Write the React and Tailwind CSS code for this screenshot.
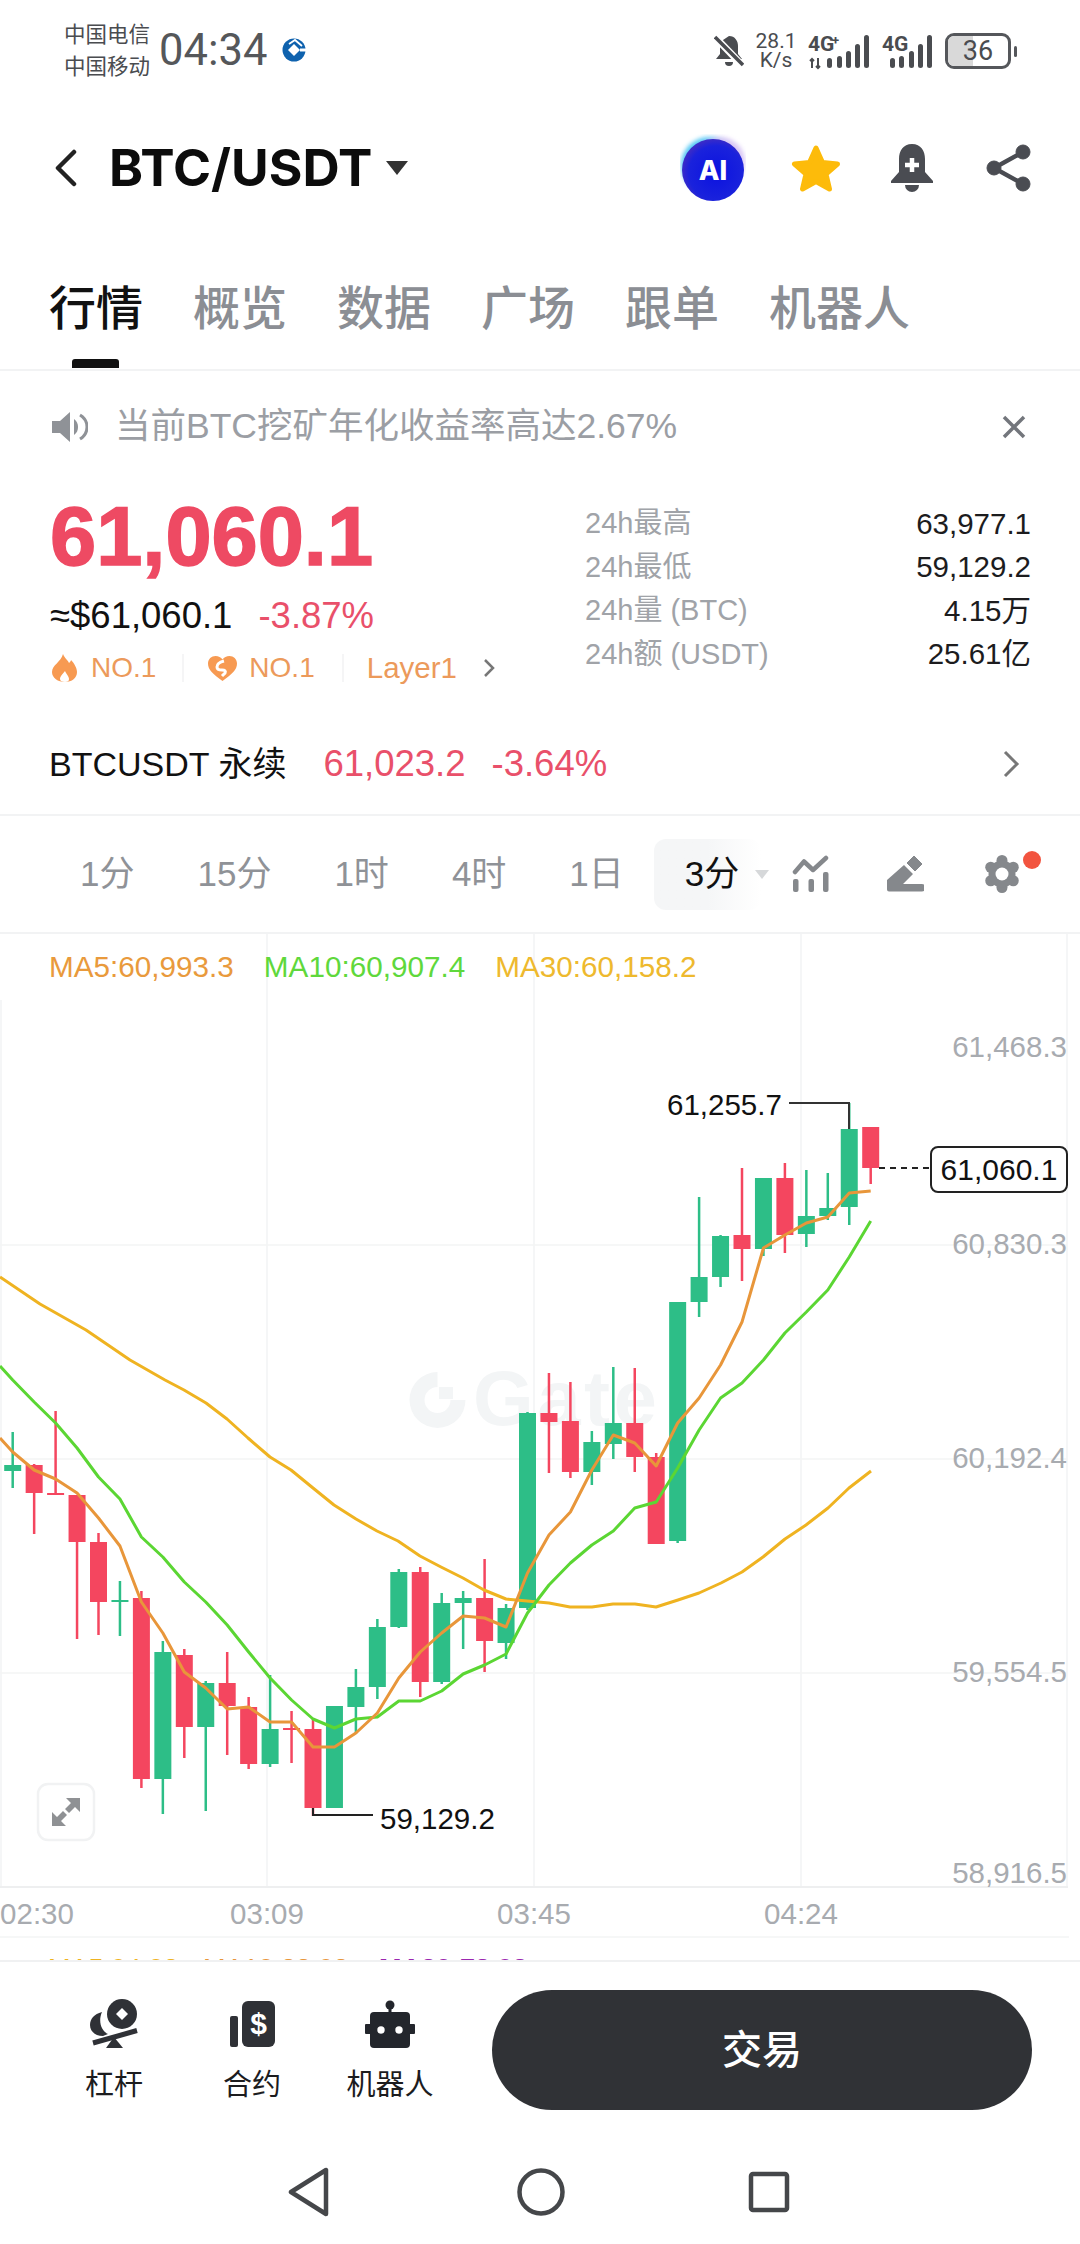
import React from "react";

const RED = "#f4465f";
const GREEN = "#2dbe87";

// [最高, 最低, 实体上, 实体下, 涨跌]  y 是页面坐标
const candles = [
  [1432, 1488, 1465, 1471, 1], [1464, 1534, 1465, 1493, 0], [1411, 1494, 1493, 1495, 0], [1495, 1639, 1495, 1542, 0],
  [1533, 1635, 1542, 1602, 0], [1581, 1636, 1600, 1602, 1], [1591, 1788, 1598, 1779, 0], [1641, 1814, 1652, 1779, 1],
  [1649, 1758, 1655, 1727, 0], [1681, 1811, 1683, 1727, 1], [1652, 1755, 1683, 1706, 0], [1697, 1769, 1707, 1764, 0],
  [1675, 1767, 1729, 1764, 1], [1711, 1763, 1728, 1730, 0], [1719, 1816, 1729, 1808, 0], [1706, 1808, 1706, 1808, 1],
  [1669, 1734, 1687, 1707, 1], [1619, 1699, 1627, 1687, 1], [1569, 1628, 1572, 1627, 1], [1567, 1697, 1572, 1682, 0],
  [1593, 1684, 1603, 1682, 1], [1591, 1649, 1598, 1603, 1], [1559, 1672, 1598, 1641, 0], [1604, 1659, 1608, 1643, 1],
  [1412, 1610, 1413, 1608, 1], [1373, 1473, 1413, 1422, 0], [1382, 1478, 1421, 1472, 0], [1431, 1485, 1442, 1472, 1],
  [1367, 1459, 1423, 1444, 1], [1368, 1472, 1423, 1457, 0], [1453, 1544, 1457, 1544, 0], [1302, 1543, 1302, 1541, 1],
  [1197, 1317, 1277, 1302, 1], [1235, 1287, 1236, 1277, 1], [1168, 1281, 1235, 1249, 0], [1178, 1256, 1178, 1249, 1],
  [1163, 1253, 1178, 1235, 0], [1170, 1247, 1216, 1234, 1], [1173, 1220, 1208, 1216, 1], [1103, 1225, 1129, 1207, 1],
  [1127, 1184, 1127, 1168, 0],
];

const xOf = (i) => 12.7 + 21.45 * i;
const series = (ys) => ys.map((y, i) => `${xOf(i)},${y}`).join(" ");

const ma5 = "0,1438 " + series([1452, 1470, 1479, 1493, 1518, 1546, 1602, 1633, 1672, 1688, 1709, 1707, 1722, 1722, 1747, 1747, 1733, 1713, 1678, 1652, 1633, 1616, 1618, 1627, 1573, 1535, 1512, 1470, 1435, 1443, 1466, 1423, 1398, 1365, 1322, 1248, 1235, 1223, 1217, 1193, 1191]);
const ma10 = "0,1366 " + series([1380, 1402, 1423, 1448, 1477, 1499, 1537, 1557, 1582, 1602, 1625, 1652, 1678, 1700, 1719, 1728, 1719, 1717, 1701, 1701, 1691, 1674, 1665, 1654, 1613, 1585, 1563, 1545, 1531, 1508, 1502, 1468, 1430, 1398, 1383, 1360, 1333, 1312, 1290, 1257, 1221]);
const ma30 = "0,1277 40,1304 86,1330 130,1360 165,1380 184,1390 206,1403 227,1419 248,1438 270,1457 291,1470 313,1488 334,1505 356,1519 377,1531 398,1541 420,1556 441,1567 463,1578 484,1590 506,1599 527,1601 549,1603 570,1607 592,1607 613,1604 635,1604 656,1607 678,1600 699,1593 721,1583 742,1572 763,1557 785,1539 806,1525 828,1508 849,1488 871,1471";

const StatusBar = () => (
  <div className="h-[102px] shrink-0 flex items-center text-[#4a4c50]">
    <div className="ml-[64px] mb-[4px] w-[95px] text-[21.5px] leading-[32px] font-['Noto_Sans_CJK_SC',sans-serif]">
      <div>中国电信</div>
      <div>中国移动</div>
    </div>
    <span className="text-[43.5px] leading-none font-normal text-[#55575a] font-['Roboto',sans-serif]">04:34</span>
    <svg className="ml-[15px] mb-[2px]" width="24" height="24" viewBox="0 0 24 24">
      <circle cx="12" cy="12" r="11.500" fill="#0f62ae" />
      <path d="M12 6l6 6-6 6-6-6z" fill="#fff" />
      <path d="M18 12h6" stroke="#fff" strokeWidth="3" />
      <path d="M7 6l6-4 7 6" fill="none" stroke="#fff" strokeWidth="1.800" />
    </svg>
    <div className="ml-auto mr-[63px] flex items-center">
      <svg width="30" height="34" viewBox="0 0 30 34" fill="#4a4c50">
        <path d="M15 2c6 0 9 5 9 10v8l4 5H2l4-5v-8c0-2 .5-4 1.500-5z" />
        <path d="M11 28h8a4 4 0 0 1-8 0z" />
        <path d="M1 3l26 27" stroke="#fff" strokeWidth="7" />
        <path d="M1 3l28 28" stroke="#4a4c50" strokeWidth="3.500" />
      </svg>
      <div className="ml-[12px] w-[40px] flex flex-col items-center font-['Roboto',sans-serif] text-[21px] leading-[19px]">
        <span>28.1</span>
        <span>K/s</span>
      </div>
      <svg className="ml-[12px]" width="124" height="40" viewBox="809 30 124 40" fill="#4a4c50">
        <text x="809" y="50" fontSize="21" fontWeight="700" fontFamily="Roboto">4G</text>
        <text x="833" y="44" fontSize="13" fontWeight="700" fontFamily="Roboto">+</text>
        <path d="M813 58v9M811 60l2-2 2 2M819 57v10M817 65l2 2 2-2" stroke="#4a4c50" strokeWidth="2" fill="none" />
        {[[828, 57], [838, 55], [847, 50], [856, 43], [865, 34]].map(([x, y]) => (
          <rect key={x} x={x} y={y} width="5" height={67 - y} rx="2.500" />
        ))}
        <text x="883" y="50" fontSize="21" fontWeight="700" fontFamily="Roboto">4G</text>
        {[[891, 57], [900, 55], [910, 50], [919, 43], [928, 34]].map(([x, y]) => (
          <rect key={x} x={x} y={y} width="5" height={67 - y} rx="2.500" />
        ))}
      </svg>
      <div className="ml-[13px] relative w-[66px] h-[36px] rounded-[9px] border-[3px] border-[#55575b] overflow-hidden flex items-center justify-center">
        <div className="absolute left-0 top-0 bottom-0 w-[25px] bg-[#d9d9d9]" />
        <span className="relative text-[27px] leading-none font-['Roboto',sans-serif]">36</span>
      </div>
      <div className="ml-[3px] w-[3px] h-[11px] rounded-full bg-[#55575b]" />
    </div>
  </div>
);

const Header = () => (
  <div className="h-[132px] shrink-0 flex items-center pl-[54px] pr-[49px]">
    <svg width="24" height="38" viewBox="0 0 24 38" fill="none" stroke="#222" strokeWidth="4.500" strokeLinecap="round" strokeLinejoin="round">
      <path d="M20 3L4 19l16 16" />
    </svg>
    <span className="ml-[31px] text-[51.5px] leading-none font-bold text-[#0c0c0c] font-['Inter',sans-serif]">BTC/USDT</span>
    <svg className="ml-[13px]" width="24" height="16" viewBox="0 0 24 16"><path d="M1 1h22L12 15z" fill="#333" /></svg>
    <div className="ml-auto flex items-center">
      <svg width="66" height="68" viewBox="0 0 66 68">
        <defs>
          <radialGradient id="aiFill" cx="55%" cy="55%" r="55%">
            <stop offset="0%" stopColor="#0b12e0" />
            <stop offset="80%" stopColor="#1a22dc" />
            <stop offset="100%" stopColor="#3a2bc8" />
          </radialGradient>
          <filter id="aiGlow"><feGaussianBlur stdDeviation="2" /></filter>
        </defs>
        <circle cx="29" cy="31" r="28" fill="#55c8f5" filter="url(#aiGlow)" />
        <circle cx="40" cy="28" r="25" fill="#d9c8f5" filter="url(#aiGlow)" />
        <circle cx="33" cy="36" r="31" fill="url(#aiFill)" />
        <text x="33" y="46" textAnchor="middle" fill="#fff" fontSize="27" fontWeight="800" fontFamily="Inter">AI</text>
      </svg>
      <svg className="ml-[45px]" width="50" height="48" viewBox="0 0 50 48">
        <path d="M25 4l6.500 14.500 15 1.500-11.500 10 3.500 15L25 37.500 11.500 45 15 30 3.500 20l15-1.500z" fill="#fdbb0a" stroke="#fdbb0a" strokeWidth="5" strokeLinejoin="round" />
      </svg>
      <svg className="ml-[50px]" width="42" height="48" viewBox="0 0 42 48" fill="#4a4c52">
        <path d="M21 0c9 0 13 7 13 15v13l8 9v2H0v-2l8-9V15C8 7 12 0 21 0z" />
        <path d="M14 41h14a7 7 0 0 1-14 0z" />
        <path d="M21 14v14M14 21h14" stroke="#fff" strokeWidth="4.500" />
      </svg>
      <svg className="ml-[53px]" width="45" height="48" viewBox="0 0 45 48" fill="#4a4c52" stroke="#4a4c52">
        <path d="M37 8L8 24l29 16" fill="none" strokeWidth="4.500" />
        <circle cx="37" cy="8" r="7" />
        <circle cx="8" cy="24" r="7" />
        <circle cx="37" cy="40" r="7" />
      </svg>
    </div>
  </div>
);

const tabs = ["行情", "概览", "数据", "广场", "跟单", "机器人"];

const Tabs = () => (
  <div className="h-[137px] shrink-0 relative border-b-2 border-[#f2f3f4] flex gap-[50px] pl-[49px] pt-[41px]">
    {tabs.map((t, i) => (
      <span key={t} className={`text-[47px] leading-[68px] font-medium ${i === 0 ? "text-[#111]" : "text-[#8b8e94]"}`}>{t}</span>
    ))}
    <div className="absolute left-[72px] bottom-[1px] w-[47px] h-[9px] rounded-t-[3px] bg-[#111]" />
  </div>
);

const Notice = () => (
  <div className="h-[112px] shrink-0 flex items-center pl-[52px] pr-[54px]">
    <svg width="36" height="30" viewBox="0 0 36 30" fill="#8f9297">
      <path d="M0 9h8l10-9v30L8 21H0z" />
      <path d="M22 7c3 2 4 5 4 8s-1 6-4 8z" />
      <path d="M28 3c5 3 7 7 7 12s-2 9-7 12" fill="none" stroke="#8f9297" strokeWidth="3" />
    </svg>
    <span className="ml-[27px] text-[35.500px] leading-none text-[#9b9ea4]">当前BTC挖矿年化收益率高达2.67%</span>
    <svg className="ml-auto" width="24" height="24" viewBox="0 0 24 24" stroke="#73767c" strokeWidth="3.500">
      <path d="M2 2l20 20M22 2L2 22" />
    </svg>
  </div>
);

const stats = [
  ["24h最高", "63,977.1"],
  ["24h最低", "59,129.2"],
  ["24h量 (BTC)", "4.15万"],
  ["24h额 (USDT)", "25.61亿"],
];

const Price = () => (
  <div className="h-[231px] shrink-0 flex pl-[50px] pr-[49px]">
    <div className="w-[535px] shrink-0 pt-[12px]">
      <div className="h-[84px] text-[83px] leading-[84px] font-bold text-[#ee4a63] [-webkit-text-stroke:1.5px_#ee4a63]">61,060.1</div>
      <div className="mt-[15px] h-[44px] flex items-center text-[36.500px] leading-none">
        <span className="text-[#111]">≈$61,060.1</span>
        <span className="ml-[26px] text-[#e9506a]">-3.87%</span>
      </div>
      <div className="mt-[12px] h-[36px] flex items-center text-[28px] text-[#ec9a5b]">
        <svg className="ml-[2px]" width="25" height="28" viewBox="0 0 25 28">
          <path d="M11 0c2 5 5 6 6 9 1-1 2-2 2-3 3 3 6 8 6 12 0 6-5 10-12 10S0 24 0 18C0 11 9 8 11 0z" fill="#f79a52" />
          <path d="M13 17c-2 3-5 5-5 8 0 2 2 3 5 3s4-1 4-3c0-3-3-5-4-8z" fill="#fff" />
        </svg>
        <span className="ml-[14px]">NO.1</span>
        <div className="ml-[26px] w-[2px] h-[28px] bg-[#f5f5f6]" />
        <svg className="ml-[24px]" width="29" height="25" viewBox="0 0 29 25">
          <path d="M14.500 25C5 18 0 14 0 7.500 0 3 3.500 0 7.500 0c3 0 5.500 1.500 7 3.500C16 1.500 18.500 0 21.500 0 25.500 0 29 3 29 7.500 29 14 24 18 14.500 25z" fill="#f79a52" />
          <path d="M16 5c-4 1-7 3-7 6s3 3 5 3c3 0 4 1 3 3l-3 3" fill="none" stroke="#fff" strokeWidth="3" />
        </svg>
        <span className="ml-[12px]">NO.1</span>
        <div className="ml-[27px] w-[2px] h-[28px] bg-[#f5f5f6]" />
        <span className="ml-[23px] text-[29.500px]">Layer1</span>
        <svg className="ml-[26px]" width="13" height="20" viewBox="0 0 13 20" fill="none" stroke="#777" strokeWidth="2.500">
          <path d="M2 2l8 8-8 8" />
        </svg>
      </div>
    </div>
    <div className="flex-1 pt-[19px] text-[29.500px]">
      {stats.map(([k, v]) => (
        <div key={k} className="h-[43.500px] flex items-center justify-between">
          <span className="text-[29px] text-[#a0a3a8]">{k}</span>
          <span className="text-[#1c1c1e]">{v}</span>
        </div>
      ))}
    </div>
  </div>
);

const Perp = () => (
  <div className="h-[102px] shrink-0 border-b-2 border-[#f2f3f4] flex items-center pl-[49px] pr-[60px]">
    <span className="text-[34px] text-[#111]">BTCUSDT 永续</span>
    <span className="ml-[37px] text-[36.500px] text-[#e9506a]">61,023.2</span>
    <span className="ml-[26px] text-[36.500px] text-[#e9506a]">-3.64%</span>
    <svg className="ml-auto" width="18" height="28" viewBox="0 0 18 28" fill="none" stroke="#777" strokeWidth="3">
      <path d="M3 2l12 12L3 26" />
    </svg>
  </div>
);

const frames = ["1分", "15分", "1时", "4时", "1日"];
const gearLobes = [90, 30, -30, -90, -150, 150];

const Timeframes = () => (
  <div className="h-[118px] shrink-0 border-b-2 border-[#f2f3f4] flex items-center pl-[80px] text-[35px] text-[#8f9297] whitespace-nowrap">
    <div className="flex gap-[63px] shrink-0">
      {frames.map((f) => <span key={f}>{f}</span>)}
    </div>
    <div className="ml-[30px] w-[107px] h-[71px] shrink-0 rounded-[12px] bg-gradient-to-r from-[#f5f6f7] via-[#f5f6f7] to-white flex items-center pl-[31px] text-[#111]">
      <span className="shrink-0">3分</span>
      <svg className="ml-[16px] shrink-0" width="14" height="9" viewBox="0 0 14 9"><path d="M0 0h14L7 9z" fill="#d6d8da" /></svg>
    </div>
    <svg className="ml-[31px] shrink-0" width="38" height="38" viewBox="0 0 38 38" fill="#85888c">
      <path d="M3 17L12 6.500 21 15 34 3" fill="none" stroke="#85888c" strokeWidth="4.500" strokeLinecap="round" strokeLinejoin="round" />
      <rect x="1" y="24" width="5.500" height="13" rx="2" />
      <rect x="16.500" y="24" width="5.500" height="13" rx="2" />
      <rect x="31" y="17" width="5.500" height="20" rx="2" />
    </svg>
    <svg className="ml-[57px] shrink-0" width="37" height="36" viewBox="0 0 37 36" fill="#85888c">
      <path d="M27 0l8 8-7 7-8-8z" strokeLinejoin="round" stroke="#85888c" strokeWidth="1" />
      <path d="M17 9l9 9-10 10h19a3.500 3.500 0 0 1 0 7.500H2a2 2 0 0 1-2-2V24z" />
    </svg>
    <div className="ml-[60px] relative shrink-0">
      <svg width="36" height="38" viewBox="0 0 36 38" fill="#85888c">
        {gearLobes.map((a) => (
          <circle key={a} cx={18 + 13 * Math.cos((a * Math.PI) / 180)} cy={19 + 13.500 * Math.sin((a * Math.PI) / 180)} r="5.500" />
        ))}
        <circle cx="18" cy="19" r="13.500" />
        <circle cx="18" cy="19" r="6.500" fill="#fff" />
      </svg>
      <div className="absolute right-[-21px] top-[-4px] w-[18px] h-[18px] rounded-full bg-[#f2543f]" />
    </div>
  </div>
);

const Chart = () => (
  <div className="h-[1026px] shrink-0 relative overflow-hidden">
    <svg className="absolute inset-0" width="1080" height="1026" viewBox="0 934 1080 1026" fontFamily="Liberation Sans">
      {[267, 534, 801, 1067].map((x) => (
        <line key={x} x1={x} y1="934" x2={x} y2="1887" stroke="#f5f6f7" strokeWidth="2" />
      ))}
      <line x1="1" y1="1000" x2="1" y2="1887" stroke="#f5f6f7" strokeWidth="2" />
      {[1245, 1459, 1673].map((y) => (
        <line key={y} x1="0" y1={y} x2="1067" y2={y} stroke="#f3f4f5" strokeWidth="1.500" />
      ))}
      <line x1="0" y1="1887" x2="1068" y2="1887" stroke="#eeeff0" strokeWidth="2" />
      <line x1="0" y1="1937" x2="1069" y2="1937" stroke="#f3f4f5" strokeWidth="1.500" />

      {/* 水印 */}
      <g fill="#f3f5f6">
        <path d="M437.500 1372a28 28 0 1 0 28 28h-15a13 13 0 1 1-13-13z" />
        <rect x="439" y="1387" width="14" height="12" />
        <text x="473" y="1425" fontSize="78" fontWeight="700" textLength="184">Gate</text>
      </g>

      {candles.map(([hi, lo, top, bottom, up], i) => {
        const c = up ? GREEN : RED;
        const x = xOf(i);
        return (
          <g key={i}>
            <line x1={x} y1={hi} x2={x} y2={lo} stroke={c} strokeWidth="2.500" />
            <rect x={x - 8.500} y={top} width="17" height={Math.max(bottom - top, 2)} fill={c} />
          </g>
        );
      })}

      <polyline points={ma30} fill="none" stroke="#efb321" strokeWidth="3" strokeLinejoin="round" />
      <polyline points={ma10} fill="none" stroke="#5bd633" strokeWidth="3" strokeLinejoin="round" />
      <polyline points={ma5} fill="none" stroke="#e8963a" strokeWidth="3" strokeLinejoin="round" />

      {/* 坐标轴 */}
      <g fill="#a8abb0" fontSize="29.500" textAnchor="end">
        <text x="1067" y="1057">61,468.3</text>
        <text x="1067" y="1254">60,830.3</text>
        <text x="1067" y="1468">60,192.4</text>
        <text x="1067" y="1682">59,554.5</text>
        <text x="1067" y="1883">58,916.5</text>
      </g>
      <g fill="#a8abb0" fontSize="29.500" textAnchor="middle">
        <text x="37" y="1924">02:30</text>
        <text x="267" y="1924">03:09</text>
        <text x="534" y="1924">03:45</text>
        <text x="801" y="1924">04:24</text>
      </g>

      {/* 高低点、现价 */}
      <path d="M789 1103h60v26" fill="none" stroke="#333" strokeWidth="2" />
      <text x="667" y="1115" fontSize="29.500" fill="#111">61,255.7</text>
      <path d="M313 1808v7h60" fill="none" stroke="#222" strokeWidth="2" />
      <text x="380" y="1829" fontSize="29.500" fill="#111">59,129.2</text>
      <line x1="879" y1="1168" x2="931" y2="1168" stroke="#222" strokeWidth="2" strokeDasharray="6 5" />
      <rect x="931" y="1147" width="136" height="45" rx="7" fill="#fff" stroke="#222" strokeWidth="2" />
      <text x="999" y="1180" fontSize="30" fill="#111" textAnchor="middle">61,060.1</text>

      {/* 放大按钮 */}
      <rect x="38" y="1784" width="56" height="56" rx="10" fill="#fff" stroke="#f1f2f3" strokeWidth="2.500" />
      <g fill="#8f9194">
        <path d="M80 1798v14l-5-5-6 6-4-4 6-6-5-5z" />
        <path d="M52 1826v-14l5 5 6-6 4 4-6 6 5 5z" />
      </g>

      {/* 被遮住的副图指标 */}
      <g fontSize="27">
        <text x="48" y="1978" fill="#efb321">MA5:94.03</text>
        <text x="203" y="1978" fill="#e8963a">MA10:88.93</text>
        <text x="379" y="1978" fill="#9b27b0" fontWeight="700">MA30:78.93</text>
      </g>
    </svg>
    <div className="relative h-[66px] flex items-center pl-[49px] text-[29.700px] gap-[30px]">
      <span className="text-[#e99a3c]">MA5:60,993.3</span>
      <span className="text-[#5fd83c]">MA10:60,907.4</span>
      <span className="text-[#eeb92e]">MA30:60,158.2</span>
    </div>
  </div>
);

const BottomItem = ({ label, children }) => (
  <div className="w-[138px] flex flex-col items-center">
    <div className="h-[54px] flex items-center justify-center">{children}</div>
    <span className="mt-[16px] text-[29px] leading-[36px] text-[#1c1c1e]">{label}</span>
  </div>
);

const BottomBar = () => (
  <div className="h-[179px] shrink-0 border-t-2 border-[#f0f1f2] flex items-center pl-[45px] pb-[1px]">
    <BottomItem label="杠杆">
      <svg width="48" height="50" viewBox="0 0 48 50" fill="#2f3136">
        <circle cx="32" cy="15" r="15" />
        <path d="M32 9l6 6-6 6-6-6z" fill="#fff" />
        <path d="M12 13C4 15 0 20 0 26c0 6 5 11 13 11l5-2C11 32 8 22 12 13z" />
        <path d="M3 44l44-12.500" stroke="#2f3136" strokeWidth="5" />
        <path d="M24 38l9 11H16z" />
      </svg>
    </BottomItem>
    <BottomItem label="合约">
      <svg width="45" height="46" viewBox="0 0 45 46" fill="#2f3136">
        <rect x="0" y="15" width="8" height="31" rx="2" />
        <rect x="12" y="0" width="33" height="46" rx="6" />
        <text x="28.500" y="33" textAnchor="middle" fontSize="30" fontWeight="700" fill="#fff" fontFamily="Liberation Sans">$</text>
      </svg>
    </BottomItem>
    <BottomItem label="机器人">
      <svg width="50" height="48" viewBox="0 0 50 48" fill="#23262c">
        <circle cx="25" cy="5" r="4.500" />
        <rect x="23.500" y="5" width="3" height="10" />
        <rect x="5" y="12" width="40" height="36" rx="4" />
        <rect x="0" y="24" width="6" height="10" rx="1" />
        <rect x="44" y="24" width="6" height="10" rx="1" />
        <circle cx="16" cy="30" r="3.700" fill="#fff" />
        <circle cx="34" cy="30" r="3.700" fill="#fff" />
      </svg>
    </BottomItem>
    <button className="ml-[33px] w-[540px] h-[120px] rounded-full bg-[#303236] text-white text-[40px] font-medium">交易</button>
  </div>
);

const NavBar = () => (
  <div className="flex-1 flex items-center">
    <svg className="ml-[288px]" width="42" height="50" viewBox="0 0 42 50" fill="none" stroke="#45474a" strokeWidth="4.500" strokeLinejoin="round">
      <path d="M38 3v44L3 25z" />
    </svg>
    <svg className="ml-[187px]" width="48" height="50" viewBox="0 0 48 50" fill="none" stroke="#45474a" strokeWidth="4.500">
      <circle cx="24" cy="25" r="21.500" />
    </svg>
    <svg className="ml-[183px]" width="42" height="42" viewBox="0 0 42 42" fill="none" stroke="#45474a" strokeWidth="4.500">
      <rect x="3" y="3" width="36" height="36" rx="2" />
    </svg>
  </div>
);

const App = () => (
  <div className="w-[1080px] h-[2244px] overflow-hidden bg-white flex flex-col font-['Liberation_Sans','Noto_Sans_CJK_SC',sans-serif]">
    <StatusBar />
    <Header />
    <Tabs />
    <Notice />
    <Price />
    <Perp />
    <Timeframes />
    <Chart />
    <BottomBar />
    <NavBar />
  </div>
);

export default App;
